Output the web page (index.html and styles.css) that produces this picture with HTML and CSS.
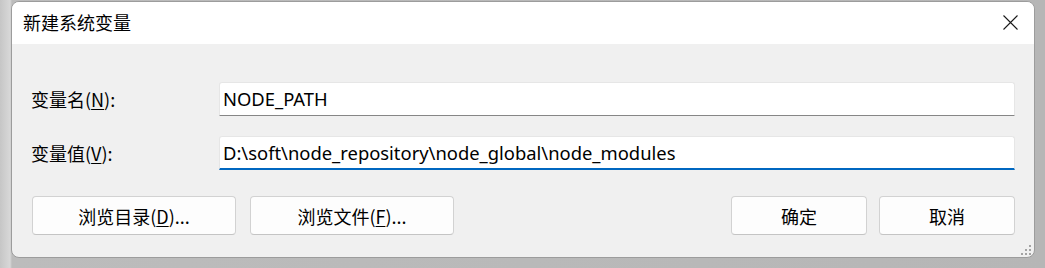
FILE: index.html
```html
<!DOCTYPE html>
<html lang="zh-CN">
<head>
  <meta charset="UTF-8" />
  <title>新建系统变量</title>
  <link rel="stylesheet" href="styles.css">
</head>
<body>
  <div class="window">
    <div class="titlebar">
      <span class="title">新建系统变量</span>
      <svg class="close" width="15" height="15" viewBox="0 0 15 15">
        <path d="M0.5 0.5 L14.5 14.5 M14.5 0.5 L0.5 14.5" stroke="#1a1a1a" stroke-width="1.1" fill="none"/>
      </svg>
    </div>

    <div class="content">
      <div class="form">
        <label class="label">变量名(<u>N</u>):</label>
        <div class="field">NODE_PATH</div>
        <label class="label">变量值(<u>V</u>):</label>
        <div class="field focused">D:\soft\node_repository\node_global\node_modules</div>
      </div>

      <div class="actions">
        <div class="group left">
          <button class="btn wide">浏览目录(<u>D</u>)...</button>
          <button class="btn wide">浏览文件(<u>F</u>)...</button>
        </div>
        <div class="group right">
          <button class="btn">确定</button>
          <button class="btn">取消</button>
        </div>
      </div>
    </div>

    <svg class="grip" width="12" height="12" viewBox="0 0 12 12">
      <rect x="9" y="1" width="2" height="2" fill="#a3a3a3"/>
      <rect x="5" y="5" width="2" height="2" fill="#a3a3a3"/>
      <rect x="9" y="5" width="2" height="2" fill="#a3a3a3"/>
      <rect x="1" y="9" width="2" height="2" fill="#a3a3a3"/>
      <rect x="5" y="9" width="2" height="2" fill="#a3a3a3"/>
      <rect x="9" y="9" width="2" height="2" fill="#a3a3a3"/>
    </svg>
  </div>
</body>
</html>
```

FILE: styles.css
```css
html, body {
  margin: 0;
  padding: 0;
}
body {
  width: 1045px;
  height: 268px;
  overflow: hidden;
  padding: 1px 0 0 11px;
  box-sizing: border-box;
  background: linear-gradient(to right, #c6c6c6 0, #d8d8d8 10px, #bcbcbc 12px, #b6b6b6 100%);
  font-family: "Noto Sans CJK SC", sans-serif;
  font-size: 18px;
  color: #000;
}
.window {
  position: relative;
  width: 1024px;
  height: 257px;
  box-sizing: border-box;
  border: 1px solid #9c9c9c;
  border-radius: 8px;
  background: #f0f0f0;
  overflow: hidden;
}
.titlebar {
  height: 42px;
  background: #fff;
  display: flex;
  align-items: center;
  justify-content: space-between;
  padding: 0 16px 3px 11px;
  box-sizing: border-box;
}
.title {
  line-height: 1;
}
.close {
  display: block;
  margin-top: 2px;
}
.content {
  padding: 38px 19px 0 19px;
}
.form {
  display: grid;
  grid-template-columns: 188px 1fr;
  row-gap: 20px;
  align-items: center;
}
.label {
  line-height: 34px;
}
u {
  text-decoration-thickness: 1px;
  text-underline-offset: 2px;
}
.field {
  height: 34px;
  box-sizing: border-box;
  background: #fff;
  border: 1px solid #e6e6e6;
  border-bottom-color: #868686;
  border-radius: 3px 3px 0 0;
  padding: 0 0 0 3px;
  line-height: 32px;
  font-family: "Noto Sans", "Noto Sans CJK SC", sans-serif;
  font-size: 18.4px;
  white-space: nowrap;
}
.field.focused {
  border-bottom: 2px solid #0067c0;
  line-height: 31px;
}
.actions {
  display: flex;
  justify-content: space-between;
  margin-top: 26px;
}
.group {
  display: flex;
}
.group.left {
  gap: 14px;
  margin-left: 1px;
}
.group.right {
  gap: 12px;
}
.btn {
  width: 136px;
  height: 39px;
  box-sizing: border-box;
  background: #fdfdfd;
  border: 1px solid #d2d2d2;
  border-bottom-color: #c4c4c4;
  border-radius: 4px;
  font-family: "Noto Sans CJK SC", sans-serif;
  font-size: 18px;
  color: #000;
  padding: 0;
  line-height: 36px;
}
.btn.wide {
  width: 204px;
}
.grip {
  position: absolute;
  right: 2px;
  bottom: 1px;
}
```
